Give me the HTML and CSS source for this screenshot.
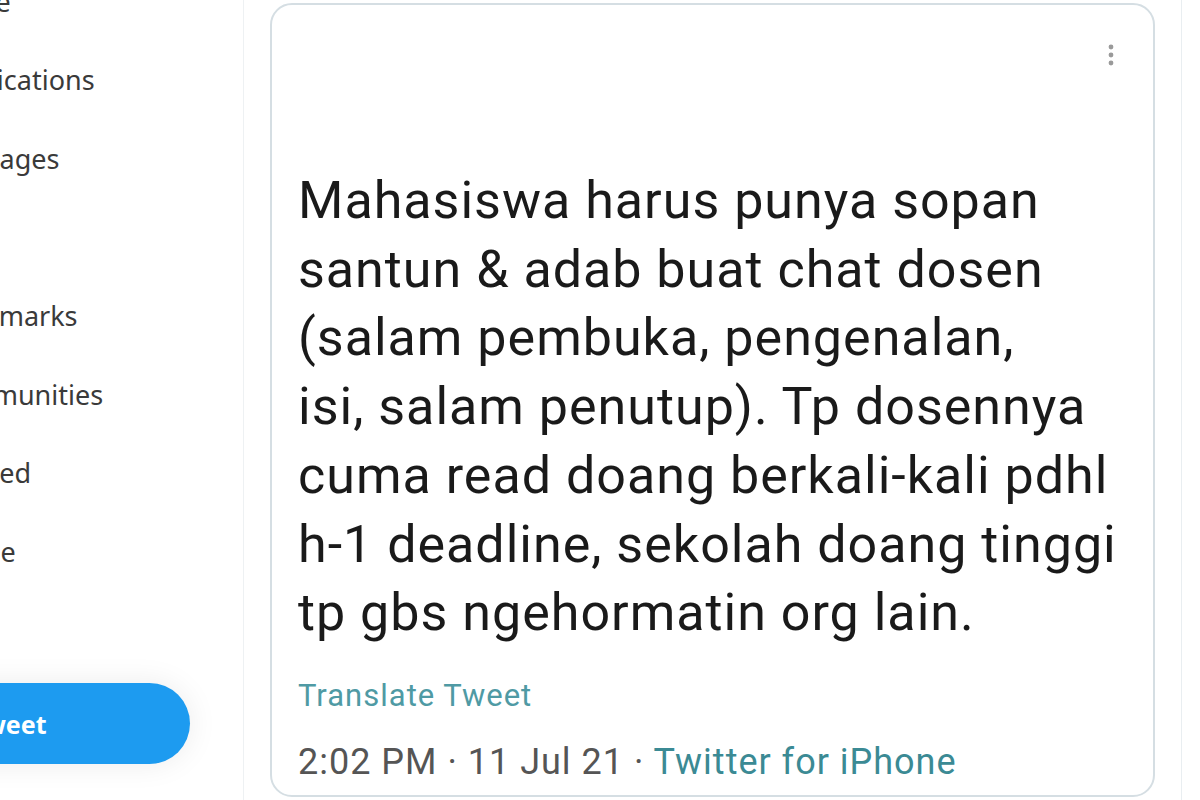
FILE: index.html
```html
<!DOCTYPE html>
<html lang="en">
<head>
    <meta charset="UTF-8">
    <meta name="viewport" content="width=device-width, initial-scale=1.0">
    <title>Tweet</title>
    <link rel="stylesheet" href="styles.css">
</head>
<body>
    <div class="layout">
        <!-- Left navigation (scrolled partly out of view) -->
        <aside class="sidebar">
            <div class="sidebar-inner">
                <nav class="nav">
                    <a class="nav-item">Home</a>
                    <a class="nav-item">Notifications</a>
                    <a class="nav-item">Messages</a>
                    <a class="nav-item">Lists</a>
                    <a class="nav-item">Bookmarks</a>
                    <a class="nav-item">Communities</a>
                    <a class="nav-item">Verified</a>
                    <a class="nav-item">Profile</a>
                    <a class="nav-item">More</a>
                </nav>
                <button class="tweet-btn">Tweet</button>
            </div>
        </aside>

        <!-- Main column -->
        <main class="main">
            <article class="card">
                <div class="card-head">
                    <span class="more-dots">
                        <svg width="8" height="24" viewBox="0 0 8 24">
                            <circle cx="4" cy="4" r="2.4" fill="#9a9a9a"/>
                            <circle cx="4" cy="12" r="2.4" fill="#9a9a9a"/>
                            <circle cx="4" cy="20" r="2.4" fill="#9a9a9a"/>
                        </svg>
                    </span>
                </div>
                <p class="tweet-text">Mahasiswa harus punya sopan<br>santun &amp; adab buat chat dosen<br>(salam pembuka, pengenalan,<br>isi, salam penutup). Tp dosennya<br>cuma read doang berkali-kali pdhl<br>h-1 deadline, sekolah doang tinggi<br>tp gbs ngehormatin org lain.</p>
                <a class="translate">Translate Tweet</a>
                <div class="meta">2:02 PM · 11 Jul 21 · <span class="source">Twitter for iPhone</span></div>
            </article>
        </main>
    </div>
</body>
</html>
```

FILE: styles.css
```css
html, body {
    margin: 0;
    height: 100%;
    overflow: hidden;
    background: #fff;
}
.layout {
    display: flex;
    height: 800px;
}
.sidebar {
    width: 243px;
    flex-shrink: 0;
    border-right: 1px solid #eef1f3;
    overflow: hidden;
}
.sidebar-inner {
    margin-left: -66px;
    margin-top: -38px;
}
.nav {
    display: flex;
    flex-direction: column;
}
.nav-item {
    height: 78.6px;
    display: flex;
    align-items: center;
    font-family: "Noto Sans", "Open Sans", sans-serif;
    font-size: 27px;
    color: #3a3a3a;
    white-space: nowrap;
}
.tweet-btn {
    margin-top: 14px;
    margin-left: -107px;
    width: 363px;
    height: 81px;
    border: none;
    border-radius: 41px;
    background: #1d9bf0;
    color: #fff;
    font-family: "Noto Sans", "Open Sans", sans-serif;
    font-weight: 700;
    font-size: 25px;
    box-shadow: 0 0 30px rgba(0, 0, 0, 0.08);
}
.main {
    width: 938px;
    flex-shrink: 0;
    border-right: 1px solid #e9eef1;
    padding: 3px 0 0 26px;
    box-sizing: border-box;
}
.card {
    width: 885px;
    height: 794px;
    box-sizing: border-box;
    border: 2px solid #d5dee3;
    border-radius: 22px;
    padding: 0 0 0 26px;
    font-family: Roboto, "Liberation Sans", sans-serif;
}
.card-head {
    height: 162px;
    display: flex;
    justify-content: flex-end;
    align-items: flex-start;
}
.more-dots {
    margin: 38px 38px 0 0;
}
.tweet-text {
    margin: 0;
    font-size: 52px;
    line-height: 68.7px;
    letter-spacing: 1px;
    color: #1a1a1a;
    white-space: nowrap;
}
.translate {
    display: block;
    margin-top: 29px;
    font-size: 31px;
    letter-spacing: 1px;
    color: #4f9aa4;
}
.meta {
    margin-top: 27px;
    font-size: 36px;
    letter-spacing: 1px;
    color: #555;
}
.source {
    color: #3b8a94;
}
```
